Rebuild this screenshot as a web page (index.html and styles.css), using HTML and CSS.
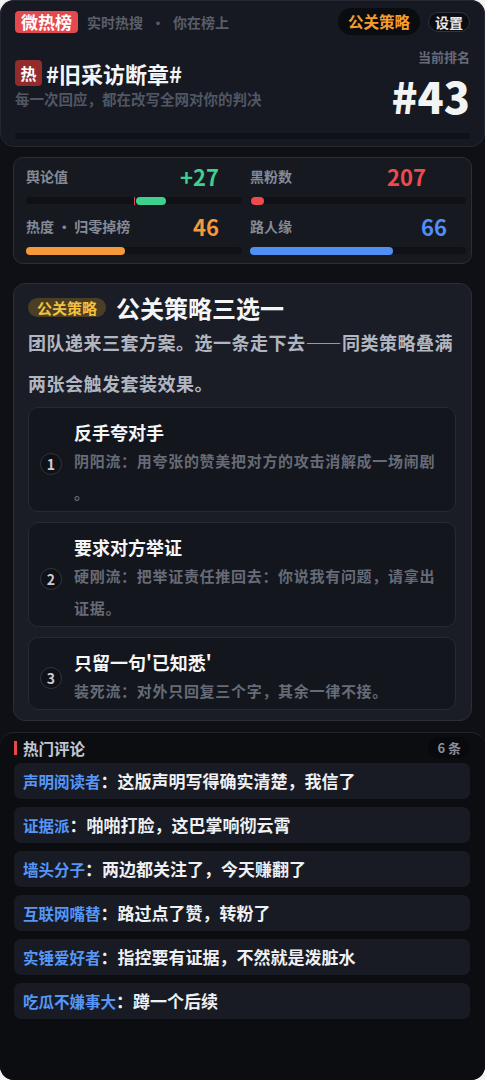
FILE: index.html
```html
<!DOCTYPE html>
<html lang="zh-CN">
<head>
    <meta charset="UTF-8">
    <meta name="viewport" content="width=device-width, initial-scale=1.0">
    <title>微热榜</title>
    <link rel="stylesheet" href="styles.css">
</head>
<body>
    <div class="app">
        <header class="hero">
            <div class="topbar">
                <div class="brand">
                    <span class="brand-badge">微热榜</span>
                    <span class="brand-sub">实时热搜<span class="dot">·</span>你在榜上</span>
                </div>
                <div class="top-actions">
                    <span class="pill-strategy">公关策略</span>
                    <span class="pill-settings">设置</span>
                </div>
            </div>
            <div class="hero-main">
                <div class="hero-left">
                    <div class="topic">
                        <span class="hot-badge">热</span>
                        <span class="topic-title">#旧采访断章#</span>
                    </div>
                    <p class="topic-sub">每一次回应，都在改写全网对你的判决</p>
                </div>
                <div class="rank">
                    <div class="rank-label">当前排名</div>
                    <div class="rank-num">#43</div>
                </div>
            </div>
            <div class="hero-track"></div>
        </header>

        <section class="stats">
            <div class="stat">
                <div class="stat-head">
                    <span class="stat-label">舆论值</span>
                    <span class="stat-value green">+27</span>
                </div>
                <div class="track">
                    <span class="track-mid"></span>
                    <span class="fill fill-green" style="left: calc(50% + 2px); width: 30px;"></span>
                </div>
            </div>
            <div class="stat stat-fans">
                <div class="stat-head">
                    <span class="stat-label">黑粉数</span>
                    <span class="stat-value red">207</span>
                </div>
                <div class="track">
                    <span class="fill fill-red" style="left: 1px; width: 13px;"></span>
                </div>
            </div>
            <div class="stat">
                <div class="stat-head">
                    <span class="stat-label">热度 · 归零掉榜</span>
                    <span class="stat-value orange">46</span>
                </div>
                <div class="track">
                    <span class="fill fill-orange" style="width: 46%;"></span>
                </div>
            </div>
            <div class="stat stat-pass">
                <div class="stat-head">
                    <span class="stat-label">路人缘</span>
                    <span class="stat-value blue">66</span>
                </div>
                <div class="track">
                    <span class="fill fill-blue" style="width: 66%;"></span>
                </div>
            </div>
        </section>

        <section class="strategy">
            <div class="strategy-head">
                <span class="strategy-tag">公关策略</span>
                <h2 class="strategy-title">公关策略三选一</h2>
            </div>
            <p class="strategy-desc">团队递来三套方案。选一条走下去——同类策略叠满两张会触发套装效果。</p>
            <div class="options">
                <div class="option">
                    <span class="option-num">1</span>
                    <div class="option-body">
                        <div class="option-title">反手夸对手</div>
                        <div class="option-desc">阴阳流：用夸张的赞美把对方的攻击消解成一场闹剧。</div>
                    </div>
                </div>
                <div class="option">
                    <span class="option-num">2</span>
                    <div class="option-body">
                        <div class="option-title">要求对方举证</div>
                        <div class="option-desc">硬刚流：把举证责任推回去：你说我有问题，请拿出证据。</div>
                    </div>
                </div>
                <div class="option">
                    <span class="option-num">3</span>
                    <div class="option-body">
                        <div class="option-title">只留一句'已知悉'</div>
                        <div class="option-desc">装死流：对外只回复三个字，其余一律不接。</div>
                    </div>
                </div>
            </div>
        </section>

        <section class="comments">
            <div class="comments-head">
                <span class="comments-title">热门评论</span>
                <span class="comments-count">6 条</span>
            </div>
            <div class="comment"><span class="comment-name">声明阅读者</span>：这版声明写得确实清楚，我信了</div>
            <div class="comment"><span class="comment-name">证据派</span>：啪啪打脸，这巴掌响彻云霄</div>
            <div class="comment"><span class="comment-name">墙头分子</span>：两边都关注了，今天赚翻了</div>
            <div class="comment"><span class="comment-name">互联网嘴替</span>：路过点了赞，转粉了</div>
            <div class="comment"><span class="comment-name">实锤爱好者</span>：指控要有证据，不然就是泼脏水</div>
            <div class="comment"><span class="comment-name">吃瓜不嫌事大</span>：蹲一个后续</div>
        </section>
    </div>
</body>
</html>
```

FILE: styles.css
```css
* {
    box-sizing: border-box;
}

body {
    margin: 0;
    background-color: #f2f2f3;
    font-family: "Noto Sans CJK SC", "Noto Sans", sans-serif;
    font-weight: 700;
    color: #eef0f3;
}

.app {
    width: 485px;
    height: 1080px;
    background-color: #0e1015;
    border-radius: 14px;
    overflow: hidden;
}

/* header */
.hero {
    background-color: #161921;
    border: 1px solid #252831;
    border-radius: 14px;
    padding: 7px 14px 7px;
}

.topbar {
    display: flex;
    justify-content: space-between;
    align-items: center;
    height: 27px;
}

.brand {
    display: flex;
    align-items: center;
}

.brand-badge {
    background-color: #e5484d;
    color: #fff;
    font-size: 17px;
    line-height: 22px;
    padding: 0 6px;
    border-radius: 4px;
}

.brand-sub {
    margin-left: 9px;
    font-size: 14px;
    color: #595e6a;
}

.dot {
    margin: 0 8px;
}

.top-actions {
    display: flex;
    align-items: center;
    gap: 8px;
}

.pill-strategy {
    background-color: #0a0c10;
    color: #f59e2e;
    font-size: 15.5px;
    line-height: 27px;
    padding: 0 10px;
    border-radius: 14px;
}

.pill-settings {
    background-color: #0b0d11;
    border: 1px solid #30343e;
    color: #e8e9ec;
    font-size: 14px;
    line-height: 18px;
    padding: 0 6px;
    border-radius: 10px;
}

.hero-main {
    display: flex;
    justify-content: space-between;
    margin-top: 15px;
}

.hero-left {
    padding-top: 10px;
}

.topic {
    display: flex;
    align-items: center;
    height: 26px;
}

.hot-badge {
    width: 27px;
    height: 26px;
    line-height: 26px;
    text-align: center;
    background-color: #922b2b;
    color: #fff;
    font-size: 16px;
    border-radius: 4px;
}

.topic-title {
    margin-left: 4px;
    font-size: 22px;
    color: #f4f5f7;
}

.topic-sub {
    margin: 3px 0 0;
    font-size: 14.5px;
    line-height: 20px;
    color: #515663;
}

.rank {
    text-align: right;
}

.rank-label {
    font-size: 13px;
    line-height: 14px;
    color: #666b77;
}

.rank-num {
    margin-top: 9px;
    font-size: 43px;
    font-weight: 900;
    line-height: 44px;
    color: #f2f3f5;
}

.hero-track {
    margin-top: 16px;
    height: 6px;
    border-radius: 3px;
    background-color: #0e1117;
}

/* stats */
.stats {
    margin: 10px 13px 0;
    background-color: #161920;
    border: 1px solid #2a2e38;
    border-radius: 10px;
    padding: 6px 5px 9px 12px;
    display: grid;
    grid-template-columns: 216px 216px;
    column-gap: 8px;
    row-gap: 10px;
}

.stat-head {
    display: flex;
    justify-content: space-between;
    align-items: center;
    height: 24px;
    padding-right: 23px;
}

.stat-fans .stat-head {
    padding-right: 40px;
}

.stat-pass .stat-head {
    padding-right: 19px;
}

.stat-label {
    font-size: 14px;
    color: #858a96;
}

.stat-value {
    font-size: 22px;
}

.green { color: #3fcf8e; }
.red { color: #ef4a50; }
.orange { color: #f5993a; }
.blue { color: #4f8ff6; }

.track {
    position: relative;
    margin-top: 9px;
    height: 7px;
    border-radius: 4px;
    background-color: #0f1117;
}

.track-mid {
    position: absolute;
    left: 50%;
    top: 0;
    width: 1px;
    height: 8px;
    background-color: #e5484d;
}

.fill {
    position: absolute;
    left: 0;
    top: 0;
    height: 8px;
    border-radius: 4px;
}

.fill-green { background-color: #3fcf8e; }
.fill-red { background-color: #ef4a50; }
.fill-orange { background-color: #f5993a; }
.fill-blue { background-color: #4f8ff6; }

/* strategy */
.strategy {
    margin: 19px 13px 0;
    background-color: #1a1d25;
    border: 1px solid #2a2e38;
    border-radius: 12px;
    padding: 8px 15px 10px 14px;
}

.strategy-head {
    display: flex;
    align-items: center;
    height: 30px;
}

.strategy-tag {
    background-color: #4a3f24;
    color: #f3c13e;
    font-size: 15px;
    line-height: 19px;
    padding: 0 9px;
    border-radius: 10px;
}

.strategy-title {
    margin: 0 0 0 10px;
    font-size: 24px;
    color: #f4f5f7;
}

.strategy-desc {
    margin: 0;
    font-size: 18px;
    letter-spacing: 0.5px;
    line-height: 41px;
    color: #b2b6c0;
}

.options {
    margin-top: 3px;
    display: flex;
    flex-direction: column;
    gap: 10px;
}

.option {
    display: flex;
    align-items: center;
    background-color: #14161d;
    border: 1px solid #262a33;
    border-radius: 10px;
    padding: 11px 12px 2px 11px;
}

.option-num {
    flex: none;
    width: 22px;
    height: 22px;
    line-height: 20px;
    text-align: center;
    border-radius: 50%;
    border: 1px solid #2f333d;
    background-color: #0f1116;
    color: #c9ccd3;
    font-size: 14px;
}

.option-body {
    margin-left: 12px;
}

.option-title {
    font-size: 18px;
    line-height: 26px;
    color: #f4f5f7;
}

.option-desc {
    font-size: 15px;
    letter-spacing: 0.7px;
    line-height: 32px;
    color: #666b77;
    line-break: anywhere;
}

/* comments */
.comments {
    margin-top: 11px;
    height: 400px;
    background-color: #0b0d11;
    border-top: 1px solid #22252e;
    border-radius: 14px 14px 0 0;
    padding: 4px 15px 0 14px;
}

.comments-head {
    display: flex;
    justify-content: space-between;
    align-items: center;
    height: 21px;
    margin-bottom: 5px;
}

.comments-title {
    font-size: 15.5px;
    color: #c5c8cf;
    border-left: 3px solid #e5484d;
    padding-left: 6px;
    line-height: 14px;
}

.comments-count {
    background-color: #08090c;
    color: #8c909a;
    font-size: 13px;
    line-height: 21px;
    padding: 0 9px;
    border-radius: 11px;
}

.comment {
    height: 36px;
    line-height: 36px;
    margin-bottom: 8px;
    padding-left: 9px;
    background-color: #181b23;
    border-radius: 7px;
    font-size: 17px;
    color: #eef0f3;
}

.comment-name {
    font-size: 15.5px;
    color: #5596f7;
}
```
